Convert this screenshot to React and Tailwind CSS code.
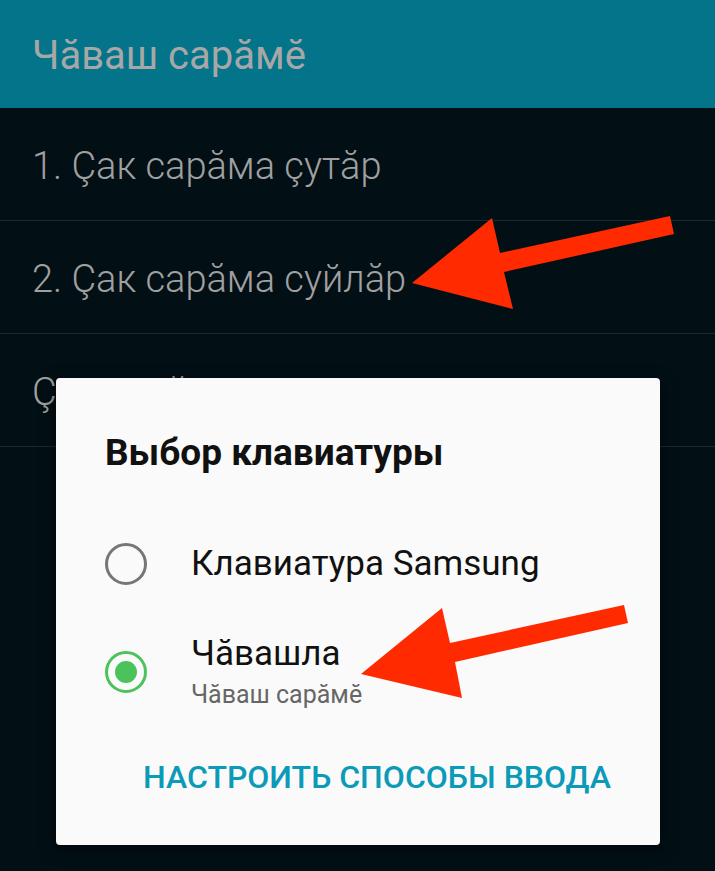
import { useState } from "react"

// пункты списка под шапкой
const items = [
  "1. Çак сарăма çутăр",
  "2. Çак сарăма суйлăр",
  "Çак сарăма çинчен",
]

const Radio = ({ checked }) => (
  <span className={`w-[42px] h-[42px] rounded-full border-[3px] flex items-center justify-center shrink-0 ${checked ? "border-[#4cc35a]" : "border-[#767676]"}`}>
    {checked && <span className="w-[22px] h-[22px] rounded-full bg-[#4cc35a]" />}
  </span>
)

export default function App() {
  const [selected, setSelected] = useState("chv")

  return (
    <div className="relative w-[715px] h-[871px] overflow-hidden bg-[#020f15]" style={{ fontFamily: "Roboto, 'Noto Sans', sans-serif" }}>
      <div className="h-[108px] bg-[#037489] px-8 flex items-center">
        <h1 className="text-[40px] leading-[44px] text-[#a7a7a7] pt-[3px]">Чăваш сарăмĕ</h1>
      </div>

      {items.map(t => (
        <div key={t} className="h-[113px] border-b border-[#1b282e] px-8 flex items-center">
          <span className="text-[38px] leading-[44px] text-[#a0a0a0] font-light pt-[4px]">{t}</span>
        </div>
      ))}

      {/* диалог выбора клавиатуры */}
      <div className="absolute left-[56px] top-[378px] w-[604px] h-[467px] bg-[#fafafa] rounded-[4px] shadow-[0_4px_16px_rgba(0,0,0,0.5)] pt-[53px] px-[49px] flex flex-col">
        <h2 className="text-[37px] leading-[44px] font-bold text-[#111]">Выбор клавиатуры</h2>

        <button onClick={() => setSelected("sam")} className="mt-[68px] flex items-center gap-[44px] text-left">
          <Radio checked={selected === "sam"} />
          <span className="text-[35px] leading-[42px] text-[#111]">Клавиатура Samsung</span>
        </button>

        <button onClick={() => setSelected("chv")} className="mt-[48px] flex items-center gap-[44px] text-left">
          <Radio checked={selected === "chv"} />
          <span className="flex flex-col">
            <span className="text-[35px] leading-[42px] text-[#111]">Чăвашла</span>
            <span className="mt-[5px] text-[25px] leading-[30px] text-[#666]">Чăваш сарăмĕ</span>
          </span>
        </button>

        <div className="mt-[48px] flex justify-end">
          <button className="text-[32px] leading-[38px] font-medium text-[#0b9bb8]">НАСТРОИТЬ СПОСОБЫ ВВОДА</button>
        </div>
      </div>

      {/* красные стрелки */}
      <svg className="absolute inset-0 pointer-events-none" width="715" height="871" viewBox="0 0 715 871">
        <polygon fill="#ff2a00" points="412,283 492,218 500,253 670,216 674,234 504,272 513,309" />
        <polygon fill="#ff2a00" points="361,674 442,608 450,643 624,605 628,623 455,662 462,698" />
      </svg>
    </div>
  )
}
